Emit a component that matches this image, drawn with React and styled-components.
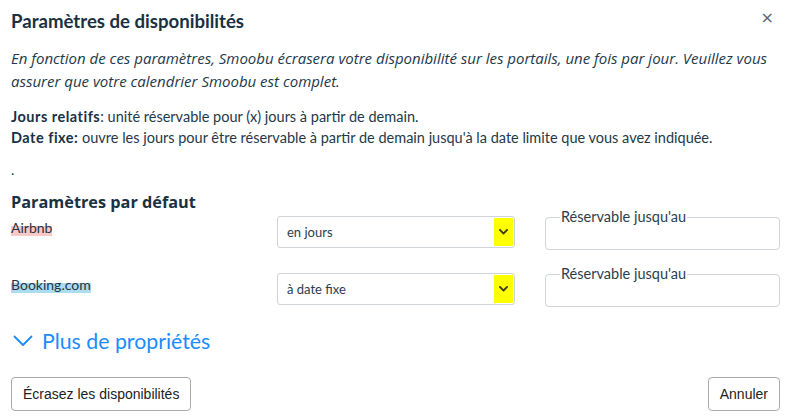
import React from "react";
import styled, { createGlobalStyle } from "styled-components";

const GlobalStyle = createGlobalStyle`
  html, body {
    margin: 0;
    padding: 0;
    background: #ffffff;
  }
  body {
    font-family: "Lato", "Open Sans", sans-serif;
    color: #1f3646;
  }
`;

const Modal = styled.div`
  width: 790px;
  height: 420px;
  box-sizing: border-box;
  padding: 9px 10px 0 11px;
  display: flex;
  flex-direction: column;
`;

const Header = styled.div`
  display: flex;
  justify-content: space-between;
  align-items: flex-start;
`;

const Title = styled.h1`
  margin: 0;
  font-size: 18.6px;
  font-weight: 700;
  line-height: 24px;
  color: #1a3142;
`;

const Close = styled.button`
  border: none;
  background: none;
  padding: 0;
  margin: -1px 6px 0 0;
  font-size: 16px;
  color: #5c6670;
  font-family: "DejaVu Sans", sans-serif;
  cursor: pointer;
`;

const Intro = styled.p`
  margin: 14px 0 0;
  font-family: "Open Sans", sans-serif;
  font-style: italic;
  font-size: 15px;
  line-height: 23px;
  color: #23394a;
`;

const Help = styled.p`
  margin: 13px 0 0;
  font-size: 14.5px;
  line-height: 21px;
  color: #23394a;
  b {
    font-weight: 700;
    letter-spacing: 0.5px;
    color: #1a3142;
  }
`;

const Dot = styled.div`
  margin-top: 13px;
  font-size: 14px;
  line-height: 18px;
`;

const SectionTitle = styled.h2`
  margin: 12px 0 0;
  font-family: "Open Sans", sans-serif;
  font-size: 16.3px;
  font-weight: 700;
  line-height: 22px;
  color: #1a3142;
`;

const Rows = styled.div`
  display: flex;
  flex-direction: column;
  gap: 23px;
  margin-top: 3px;
`;

const Row = styled.div`
  display: grid;
  grid-template-columns: 236px 238px 235px;
  column-gap: 30px;
  align-items: start;
`;

const ChannelLabel = styled.span`
  justify-self: start;
  font-size: 14px;
  line-height: 18px;
  margin-top: 3px;
  color: #1f3646;
  background: linear-gradient(
    to bottom,
    transparent 38%,
    ${(p) => p.$mark} 38%,
    ${(p) => p.$mark} 92%,
    transparent 92%
  );
`;

const Select = styled.div`
  height: 32px;
  box-sizing: border-box;
  border: 1px solid #cfd4d8;
  border-radius: 3px;
  display: flex;
  align-items: stretch;
  justify-content: space-between;
  padding: 1px 1px 1px 9px;
`;

const SelectValue = styled.span`
  font-size: 13px;
  line-height: 28px;
  color: #2b3e4c;
`;

const ArrowBox = styled.span`
  width: 19px;
  background: #ffff00;
  display: flex;
  align-items: center;
  justify-content: center;
`;

const Field = styled.fieldset`
  margin: -8px 0 0;
  height: 42px;
  box-sizing: border-box;
  border: 1px solid #cfd4d8;
  border-radius: 4px;
  padding: 0 8px;
`;

const Legend = styled.legend`
  font-size: 14.5px;
  line-height: 18px;
  padding: 0 1px;
  margin-left: 6px;
  color: #2b3e4c;
`;

const More = styled.button`
  margin-top: 21px;
  align-self: flex-start;
  border: none;
  background: none;
  padding: 0 0 0 2px;
  display: flex;
  align-items: center;
  gap: 9px;
  font-family: "Lato", "Open Sans", sans-serif;
  font-size: 21.3px;
  color: #1a8cff;
  cursor: pointer;
`;

const Footer = styled.div`
  margin-top: 23px;
  display: flex;
  justify-content: space-between;
`;

const Button = styled.button`
  height: 34px;
  box-sizing: border-box;
  padding: 0 11px;
  border: 1px solid #a9a9a9;
  border-radius: 4px;
  background: #ffffff;
  font-family: "Liberation Sans", Arial, sans-serif;
  font-size: 14px;
  color: #222;
  cursor: pointer;
`;

const Chevron = ({ size = 10, stroke = "#333", width = 2 }) => (
  <svg width={size} height={size * 0.6} viewBox="0 0 10 6" fill="none">
    <path d="M1 1l4 4 4-4" stroke={stroke} strokeWidth={width} strokeLinecap="round" strokeLinejoin="round" />
  </svg>
);

const channels = [
  { name: "Airbnb", mark: "#f9c8c8", mode: "en jours" },
  { name: "Booking.com", mark: "#abdcf0", mode: "à date fixe" },
];

export default function App() {
  return (
    <>
      <GlobalStyle />
      <Modal>
        <Header>
          <Title>Paramètres de disponibilités</Title>
          <Close>×</Close>
        </Header>
        <Intro>
          En fonction de ces paramètres, Smoobu écrasera votre disponibilité sur les portails, une fois par jour. Veuillez vous
          <br />
          assurer que votre calendrier Smoobu est complet.
        </Intro>
        <Help>
          <b>Jours relatifs</b>: unité réservable pour (x) jours à partir de demain.
          <br />
          <b>Date fixe:</b> ouvre les jours pour être réservable à partir de demain jusqu'à la date limite que vous avez indiquée.
        </Help>
        <Dot>.</Dot>
        <SectionTitle>Paramètres par défaut</SectionTitle>
        <Rows>
          {channels.map((c) => (
            <Row key={c.name}>
              <ChannelLabel $mark={c.mark}>{c.name}</ChannelLabel>
              <Select>
                <SelectValue>{c.mode}</SelectValue>
                <ArrowBox>
                  <Chevron size={9} stroke="#3a3a1a" width={2} />
                </ArrowBox>
              </Select>
              <Field>
                <Legend>Réservable jusqu'au</Legend>
              </Field>
            </Row>
          ))}
        </Rows>
        <More>
          <svg width="20" height="12" viewBox="0 0 20 12" fill="none">
            <path d="M1.5 1.5l8.5 8.5 8.5-8.5" stroke="#1a8cff" strokeWidth="1.8" strokeLinecap="round" strokeLinejoin="round" />
          </svg>
          Plus de propriétés
        </More>
        <Footer>
          <Button>Écrasez les disponibilités</Button>
          <Button>Annuler</Button>
        </Footer>
      </Modal>
    </>
  );
}
